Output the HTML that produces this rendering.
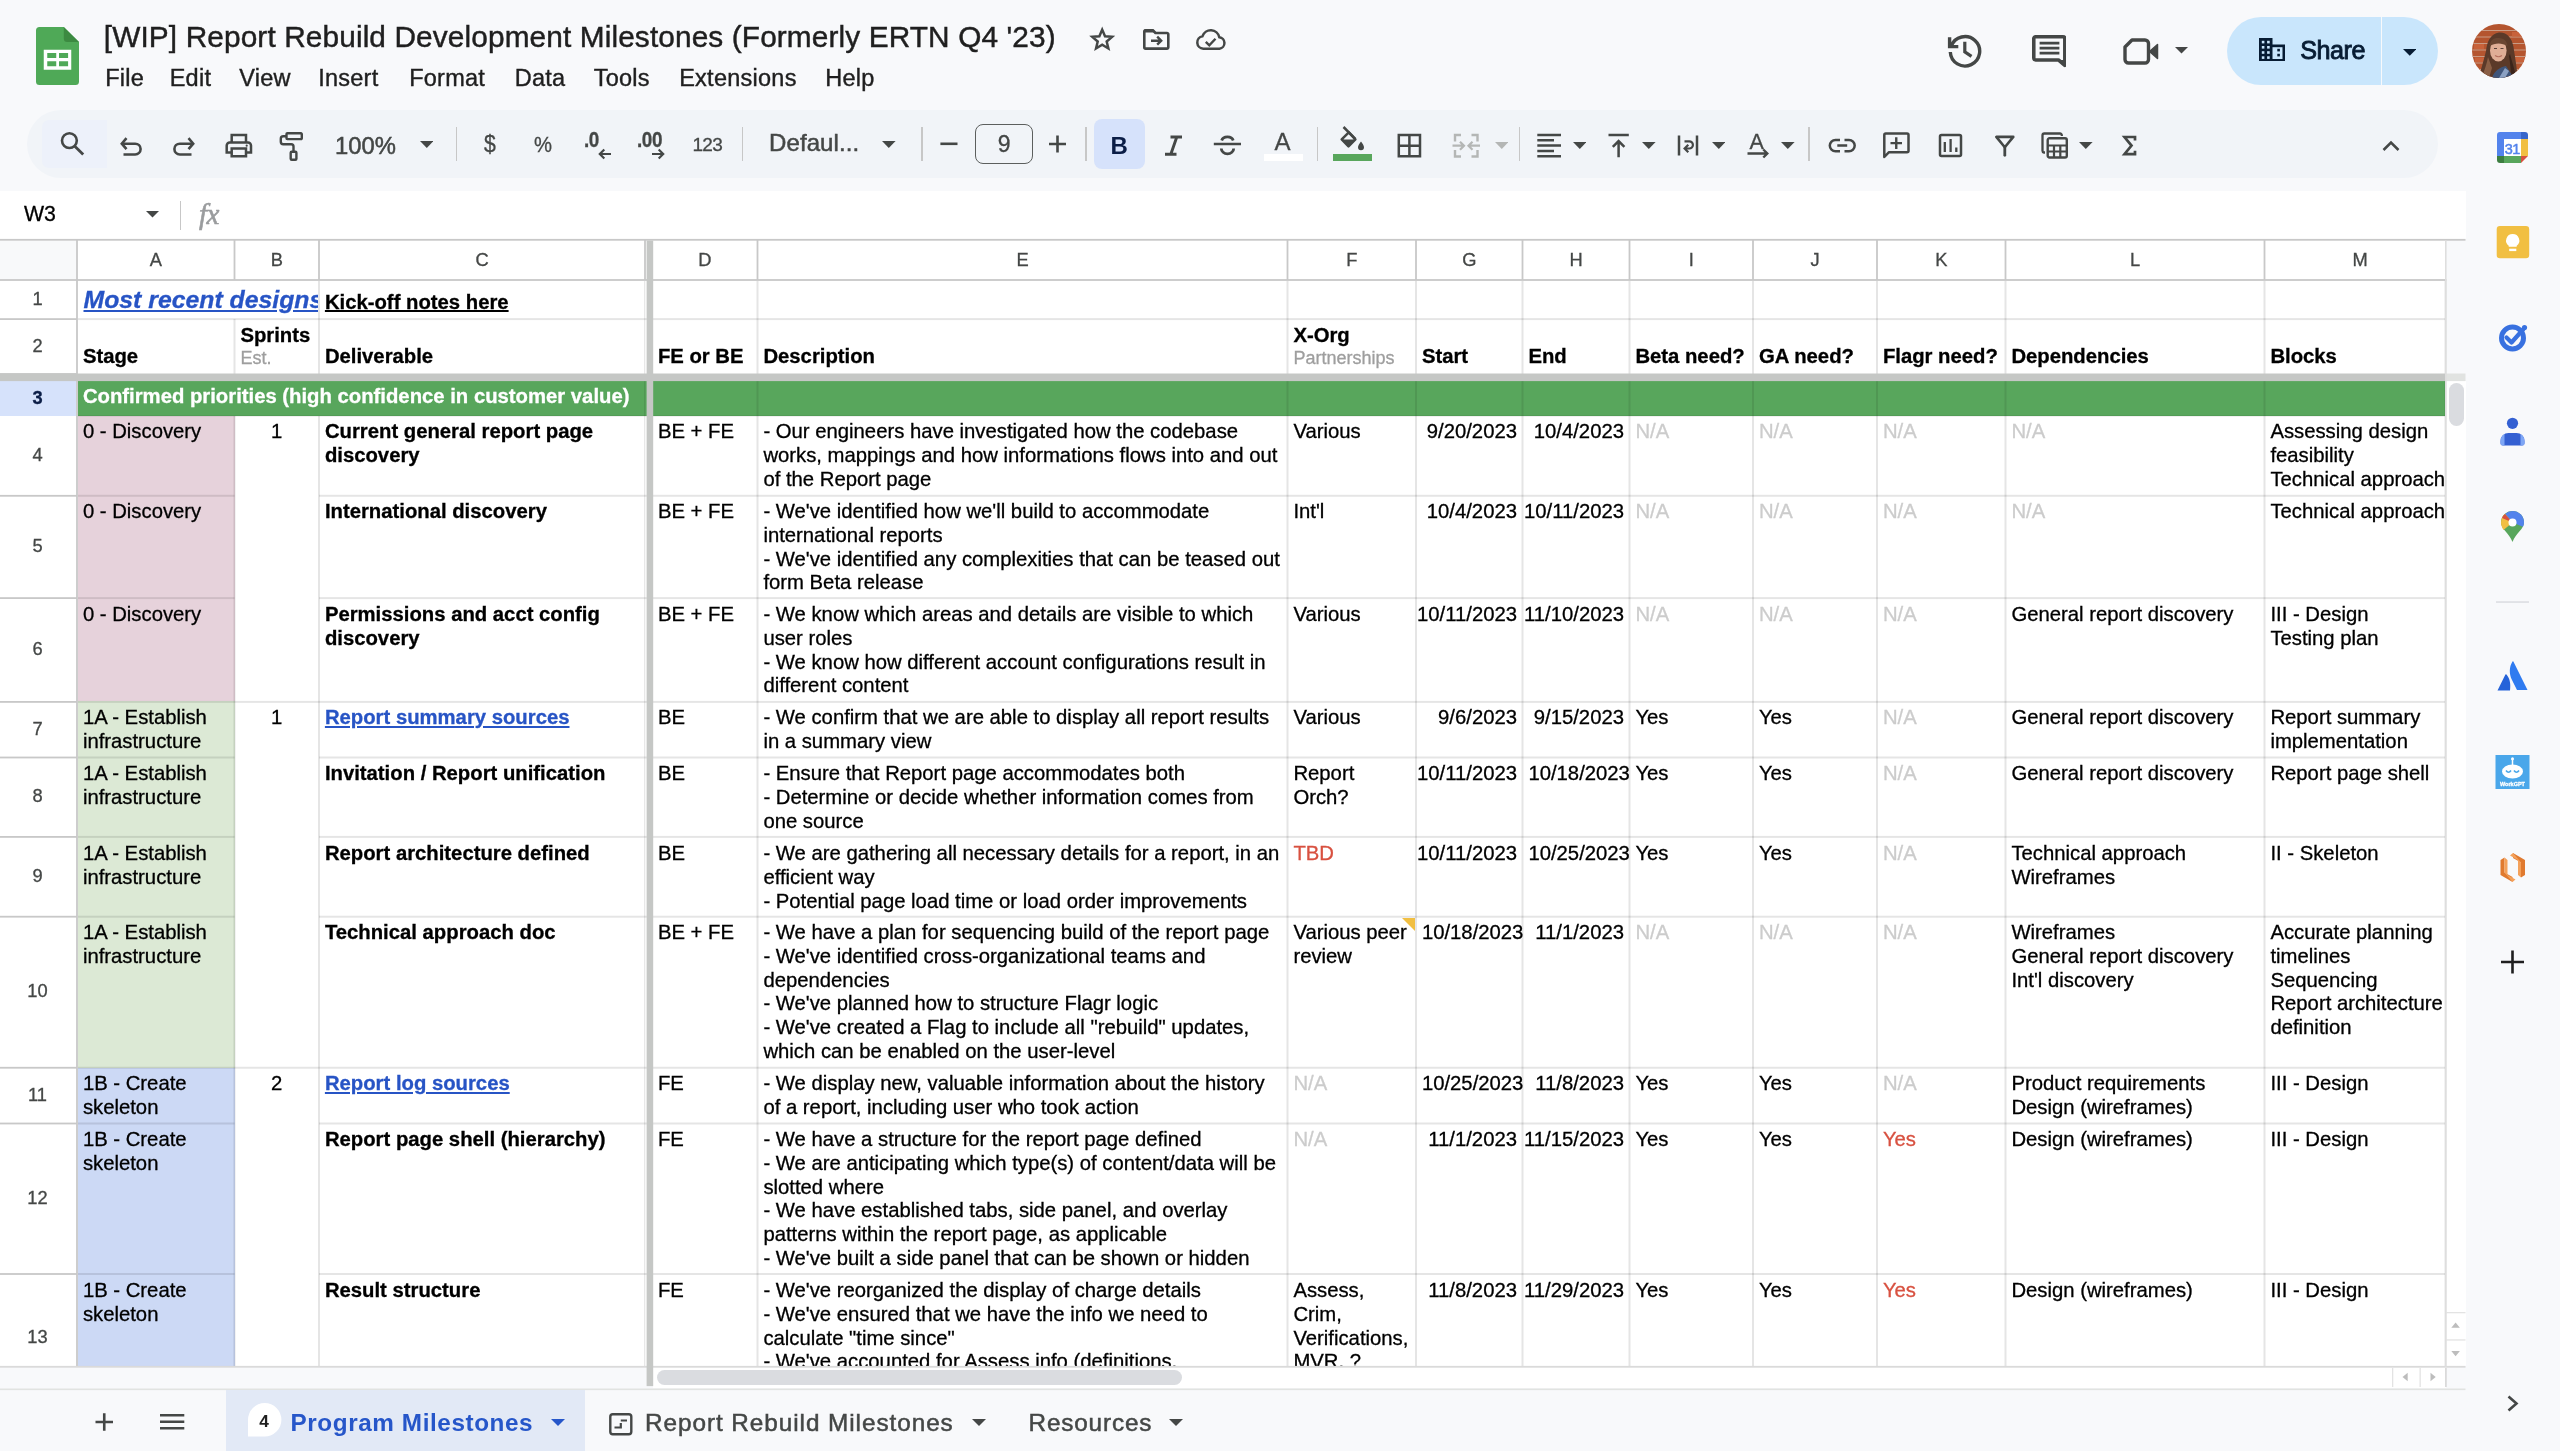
<!DOCTYPE html>
<html lang="en"><head><meta charset="utf-8"><title>[WIP] Report Rebuild Development Milestones - Google Sheets</title>
<style>
*{box-sizing:border-box;margin:0;padding:0}
html,body{width:2560px;height:1451px;overflow:hidden;background:#f8f9fb;font-family:"Liberation Sans", sans-serif;color:#000}
body{position:relative}
.a{position:absolute}
.t{position:absolute;white-space:pre;line-height:1;-webkit-text-stroke:0.3px currentColor}
.b{font-weight:bold}
.g{color:#cccccc}
.r{color:#d85140}
.lk{color:#2754c5;text-decoration:underline;font-weight:bold}
.ic{position:absolute;display:block}
</style></head>
<body>
<div id="app" style="position:absolute;left:0;top:0;width:2560px;height:1451px;overflow:hidden;background:#f8f9fb;will-change:transform">
<svg class="ic" style="left:36px;top:27px;width:43px;height:58px;" viewBox="0 0 43 58" preserveAspectRatio="none">
<path d="M3.500 0H27.800L43 15V54.500a3.500 3.500 0 0 1-3.500 3.500h-36A3.500 3.500 0 0 1 0 54.500v-51A3.500 3.500 0 0 1 3.500 0z" fill="#4fa957"/>
<path d="M27.800 0L43 15H31.300a3.500 3.500 0 0 1-3.500-3.500z" fill="#3c8a41"/>
<path d="M7.750 22.750h27.500v20H7.750z M11.250 26.100v5h9v-5z M23 26.100v5h9.100v-5z M11.250 34.250v5h9v-5z M23 34.250v5h9.100v-5z" fill="#fff" fill-rule="evenodd"/>
</svg>
<div class="t " style="left:103.8px;top:19px;font-size:29.8px;line-height:36px;color:#1f1f1f;letter-spacing:0.120px;-webkit-text-stroke:0.45px #1f1f1f">[WIP] Report Rebuild Development Milestones (Formerly ERTN Q4 '23)</div>
<svg class="ic" style="left:1080px;top:15px;width:160px;height:50px" viewBox="1080 15 160 50"><path d="M1102.20 29.62L1105.02 36.22L1112.14 36.84L1106.69 41.50L1108.36 48.45L1102.20 44.76L1096.04 48.45L1097.71 41.50L1092.26 36.84L1099.38 36.22Z" fill="none" stroke="#444746" stroke-width="2.500" stroke-linejoin="miter"/><path d="M1144.300 32V47.300A1.300 1.300 0 0 0 1145.600 48.600H1167A1.300 1.300 0 0 0 1168.300 47.300V34.300A1.300 1.300 0 0 0 1167 33H1155.500L1153 30.300H1145.600A1.300 1.300 0 0 0 1144.300 31.600Z" fill="none" stroke="#444746" stroke-width="2.600" stroke-linejoin="round"/><path d="M1144.300 29.300H1153.300L1155.800 32.600H1144.300Z" fill="#444746"/><path d="M1151 40.700H1161M1157.200 36.700L1161.200 40.700L1157.200 44.700" fill="none" stroke="#444746" stroke-width="2.400"/><path d="M1219.500 48.700H1203.300A6.300 6.300 0 0 1 1202.500 36.200A8.700 8.700 0 0 1 1219.300 37.200A5.800 5.800 0 0 1 1219.500 48.700Z" fill="none" stroke="#444746" stroke-width="2.500"/><path d="M1205.800 41.800L1209.300 45.300L1215.500 38.700" fill="none" stroke="#444746" stroke-width="2.400"/></svg>
<div class="t " style="left:105.2px;top:63.5px;font-size:23.5px;line-height:28px;color:#1f1f1f;letter-spacing:0.250px;-webkit-text-stroke:0.4px #1f1f1f">File</div>
<div class="t " style="left:169.7px;top:63.5px;font-size:23.5px;line-height:28px;color:#1f1f1f;letter-spacing:0.250px;-webkit-text-stroke:0.4px #1f1f1f">Edit</div>
<div class="t " style="left:239.2px;top:63.5px;font-size:23.5px;line-height:28px;color:#1f1f1f;letter-spacing:0.250px;-webkit-text-stroke:0.4px #1f1f1f">View</div>
<div class="t " style="left:318.2px;top:63.5px;font-size:23.5px;line-height:28px;color:#1f1f1f;letter-spacing:0.250px;-webkit-text-stroke:0.4px #1f1f1f">Insert</div>
<div class="t " style="left:409.2px;top:63.5px;font-size:23.5px;line-height:28px;color:#1f1f1f;letter-spacing:0.250px;-webkit-text-stroke:0.4px #1f1f1f">Format</div>
<div class="t " style="left:514.7px;top:63.5px;font-size:23.5px;line-height:28px;color:#1f1f1f;letter-spacing:0.250px;-webkit-text-stroke:0.4px #1f1f1f">Data</div>
<div class="t " style="left:593.7px;top:63.5px;font-size:23.5px;line-height:28px;color:#1f1f1f;letter-spacing:0.250px;-webkit-text-stroke:0.4px #1f1f1f">Tools</div>
<div class="t " style="left:679.2px;top:63.5px;font-size:23.5px;line-height:28px;color:#1f1f1f;letter-spacing:0.250px;-webkit-text-stroke:0.4px #1f1f1f">Extensions</div>
<div class="t " style="left:825.2px;top:63.5px;font-size:23.5px;line-height:28px;color:#1f1f1f;letter-spacing:0.250px;-webkit-text-stroke:0.4px #1f1f1f">Help</div>
<svg class="ic" style="left:1946px;top:32.5px;width:36px;height:36px;" viewBox="0 0 36 36" preserveAspectRatio="none"><path d="M5.200 13.200A14.700 14.700 0 1 1 4.300 19" fill="none" stroke="#444746" stroke-width="3.400"/><path d="M3.600 4.300V13.600H12.300" fill="none" stroke="#444746" stroke-width="3.400"/><path d="M18.800 8.800v10l6.700 4.600" fill="none" stroke="#444746" stroke-width="3.200"/></svg>
<svg class="ic" style="left:2031.7px;top:34.7px;width:34.6px;height:33.3px;" viewBox="0 0 35 34.500" preserveAspectRatio="none"><path d="M3.700 1.800h27.600a1.900 1.900 0 0 1 1.900 1.900V31.500l-6.500-5.700H3.700a1.900 1.900 0 0 1-1.900-1.900V3.700a1.900 1.900 0 0 1 1.900-1.900z" fill="none" stroke="#444746" stroke-width="3.600" stroke-linejoin="round"/><path d="M26.500 25.800h6.700v6.500z" fill="#444746"/><path d="M7.700 8.500h20M7.700 13.500h20M7.700 18.700h20" stroke="#444746" stroke-width="2.900"/></svg>
<svg class="ic" style="left:2123px;top:37px;width:36px;height:29px;" viewBox="0 0 36 29" preserveAspectRatio="none"><path d="M9 3h13a3.5 3.5 0 0 1 3.500 3.500V22.500A3.500 3.500 0 0 1 22 26H5.500A3.500 3.500 0 0 1 2 22.500V10z" fill="none" stroke="#444746" stroke-width="3.4" stroke-linejoin="round"/><path d="M26.500 14.500L34.500 7.500V21.500z" fill="#444746" stroke="#444746" stroke-width="1.5" stroke-linejoin="round"/></svg>
<svg class="ic" style="left:2175px;top:47.25px;width:13px;height:6.5px;" viewBox="0 0 10 5" preserveAspectRatio="none"><path d="M0 0h10L5 5z" fill="#444746"/></svg>
<div class="a" style="left:2227px;top:17px;width:211px;height:68px;border-radius:34px;background:#c9e6fc"></div>
<div class="a" style="left:2380.6px;top:17px;width:1.3px;height:68px;background:#f8f9fb;"></div>
<svg class="ic" style="left:2259px;top:37.5px;width:26px;height:23.5px;" viewBox="0 0 26 23.5" preserveAspectRatio="none"><path d="M0 0h13.500v6.500H26V23.500H0z" fill="#071c33"/><g fill="#c9e6fc"><rect x="2.800" y="2.800" width="2.600" height="2.600"/><rect x="8.100" y="2.800" width="2.600" height="2.600"/><rect x="2.800" y="8" width="2.600" height="2.600"/><rect x="8.100" y="8" width="2.600" height="2.600"/><rect x="2.800" y="13.200" width="2.600" height="2.600"/><rect x="8.100" y="13.200" width="2.600" height="2.600"/><rect x="2.800" y="18.300" width="2.600" height="2.600"/><rect x="8.100" y="18.300" width="2.600" height="2.600"/><rect x="13.500" y="9.200" width="10" height="11.800"/></g><g fill="#071c33"><rect x="18.300" y="10.800" width="2.600" height="2.600"/><rect x="18.300" y="15.800" width="2.600" height="2.600"/></g></svg>
<div class="t " style="left:2300.3px;top:34.75px;font-size:25.2px;line-height:30px;color:#071c33;letter-spacing:-0.500px;-webkit-text-stroke:0.850px #071c33">Share</div>
<svg class="ic" style="left:2402.55px;top:48.8px;width:13.5px;height:6.8px;" viewBox="0 0 10 5" preserveAspectRatio="none"><path d="M0 0h10L5 5z" fill="#071c33"/></svg>
<svg class="ic" style="left:2471.900px;top:23.600px;width:54px;height:54px" viewBox="0 0 54 54"><defs><clipPath id="av"><circle cx="27" cy="27" r="27"/></clipPath></defs><g clip-path="url(#av)"><rect width="54" height="54" fill="#b4552f"/><g stroke="#c99b84" stroke-width="1.100"><path d="M0 6.500H54M0 13H54M0 19.500H54M0 26H54M0 32.500H54M0 39H54M0 45.500H54"/></g><g fill="#c8623a"><rect x="2" y="20" width="10" height="5"/><rect x="40" y="8" width="12" height="4.500"/><rect x="42" y="33" width="10" height="5"/><rect x="3" y="33.500" width="9" height="4.500"/></g><path d="M7 54C9 44 12 36 14 27C15 17 19 9.500 27 8.500C35 8 40 14 41.500 23C43 33 45 44 45.500 54Z" fill="#5b3a29"/><path d="M10 54C12 46 15 40 16 33L20 44L17 54Z" fill="#8a5f45"/><path d="M38 30C40 38 43 46 44 54H39C39 46 38 38 37 32Z" fill="#3b241a"/><ellipse cx="26.300" cy="26.500" rx="8.300" ry="11" fill="#e0ae96"/><path d="M17.500 22C18 16 22 13.500 27 14C32 14.300 35 17 35.500 22C30 18.500 23 18.500 17.500 22Z" fill="#6b4632"/><path d="M22 24.500h3M28.500 24.500h3" stroke="#5a4038" stroke-width="1.200"/><path d="M23 31.500Q26.500 34 30 31.500" stroke="#b5705f" stroke-width="1.100" fill="none"/><path d="M20 54C22 47 28 43 34 42L42 54Z" fill="#3f557a"/><path d="M27 54L33 44L37 47L33 54Z" fill="#8aa0c2"/></g></svg>
<div class="a" style="left:27px;top:110px;width:2411px;height:68px;border-radius:34px;background:#f1f4f8"></div>
<div class="a" style="left:42px;top:119.500px;width:65px;height:48.500px;border-radius:7px 0 0 7px;background:#edf1fa"></div>
<div class="a" style="left:455.6px;top:127px;width:1.4px;height:33.5px;background:#c7c7c7;"></div>
<div class="a" style="left:741.8px;top:127px;width:1.4px;height:33.5px;background:#c7c7c7;"></div>
<div class="a" style="left:921.3px;top:127px;width:1.4px;height:33.5px;background:#c7c7c7;"></div>
<div class="a" style="left:1085.3px;top:127px;width:1.4px;height:33.5px;background:#c7c7c7;"></div>
<div class="a" style="left:1317.1px;top:127px;width:1.4px;height:33.5px;background:#c7c7c7;"></div>
<div class="a" style="left:1518.5px;top:127px;width:1.4px;height:33.5px;background:#c7c7c7;"></div>
<div class="a" style="left:1808.3px;top:127px;width:1.4px;height:33.5px;background:#c7c7c7;"></div>
<div class="t " style="left:335px;top:131px;font-size:23.8px;line-height:29px;color:#444746;-webkit-text-stroke:0.500px #444746">100%</div>
<div class="t " style="left:769px;top:128px;font-size:24px;line-height:29px;color:#444746;letter-spacing:0.100px;-webkit-text-stroke:0.500px #444746">Defaul...</div>
<div class="t " style="left:692.5px;top:132.6px;font-size:19px;line-height:23px;color:#444746;letter-spacing:-0.700px">123</div>
<div class="t " style="left:483.5px;top:129.5px;font-size:23px;line-height:28px;color:#444746;transform:scaleX(0.92);transform-origin:0 0">$</div>
<div class="t " style="left:534px;top:131px;font-size:22.5px;line-height:27px;color:#444746;transform:scaleX(0.9);transform-origin:0 0">%</div>
<div class="t b" style="left:583.5px;top:127.2px;font-size:21.5px;line-height:26px;color:#444746;letter-spacing:-0.5px;transform:scaleX(0.88);transform-origin:0 0">.0</div>
<div class="t b" style="left:637px;top:127.2px;font-size:21.5px;line-height:26px;color:#444746;letter-spacing:-0.5px;transform:scaleX(0.88);transform-origin:0 0">.00</div>
<div class="a" style="left:975px;top:123.500px;width:58px;height:40.500px;border:1.800px solid #5c5f5e;border-radius:8px"></div>
<div class="t " style="left:1004.2px;transform:translateX(-50%);top:130px;font-size:23px;line-height:28px;color:#444746">9</div>
<div class="a" style="left:1094px;top:118.500px;width:50.500px;height:50.500px;border-radius:8px;background:#d6e2fb"></div>
<div class="t b" style="left:1119.2px;transform:translateX(-50%);top:130.5px;font-size:24px;line-height:29px;color:#0b1d46;-webkit-text-stroke:0">B</div>
<div class="t " style="left:1282.5px;transform:translateX(-50%);top:127px;font-size:24px;line-height:29px;color:#444746">A</div>
<div class="a" style="left:1264px;top:154px;width:39px;height:7px;background:#ffffff;"></div>
<div class="t " style="left:1756.7px;transform:translateX(-50%);top:129px;font-size:21.5px;line-height:26px;color:#444746">A</div>
<div class="a" style="left:1333px;top:154px;width:39.3px;height:7px;background:#58a65c;"></div>
<svg class="ic" style="left:419.9px;top:141.1px;width:13.6px;height:7px;" viewBox="0 0 10 5" preserveAspectRatio="none"><path d="M0 0h10L5 5z" fill="#444746"/></svg>
<svg class="ic" style="left:882px;top:140.6px;width:13.6px;height:7px;" viewBox="0 0 10 5" preserveAspectRatio="none"><path d="M0 0h10L5 5z" fill="#444746"/></svg>
<svg class="ic" style="left:1572.9px;top:142.1px;width:13.6px;height:7px;" viewBox="0 0 10 5" preserveAspectRatio="none"><path d="M0 0h10L5 5z" fill="#444746"/></svg>
<svg class="ic" style="left:1642.4px;top:142.1px;width:13.6px;height:7px;" viewBox="0 0 10 5" preserveAspectRatio="none"><path d="M0 0h10L5 5z" fill="#444746"/></svg>
<svg class="ic" style="left:1711.9px;top:142.1px;width:13.6px;height:7px;" viewBox="0 0 10 5" preserveAspectRatio="none"><path d="M0 0h10L5 5z" fill="#444746"/></svg>
<svg class="ic" style="left:1781.2px;top:142.1px;width:13.6px;height:7px;" viewBox="0 0 10 5" preserveAspectRatio="none"><path d="M0 0h10L5 5z" fill="#444746"/></svg>
<svg class="ic" style="left:2079.2px;top:142.1px;width:13.6px;height:7px;" viewBox="0 0 10 5" preserveAspectRatio="none"><path d="M0 0h10L5 5z" fill="#444746"/></svg>
<svg class="ic" style="left:1494.9px;top:142.1px;width:13.6px;height:7px;" viewBox="0 0 10 5" preserveAspectRatio="none"><path d="M0 0h10L5 5z" fill="#b4b6b5"/></svg>
<svg class="ic" style="left:0;top:100px;width:2560px;height:90px" viewBox="0 100 2560 90"><circle cx="69.400" cy="140.600" r="7.400" fill="none" stroke="#444746" stroke-width="2.600"/><path d="M74.800 146.200L83.200 154.500" fill="none" stroke="#444746" stroke-width="2.8" /><path d="M126.500 138.200L121.800 143.700L126.500 149.200" fill="none" stroke="#444746" stroke-width="2.6" /><path d="M122.500 143.700H135.200A5.400 5.400 0 0 1 135.200 154.500H123.500" fill="none" stroke="#444746" stroke-width="2.6" /><path d="M188.500 138.200L193.200 143.700L188.500 149.200" fill="none" stroke="#444746" stroke-width="2.6" /><path d="M192.500 143.700H179.800A5.400 5.400 0 0 0 179.800 154.500H191.500" fill="none" stroke="#444746" stroke-width="2.6" /><path d="M231.700 142V135H246V142" fill="none" stroke="#444746" stroke-width="2.5" /><path d="M231.700 152.500H226.700V145.500A3 3 0 0 1 229.700 142.500H248A3 3 0 0 1 251 145.500V152.500H246" fill="none" stroke="#444746" stroke-width="2.5" /><path d="M231.700 148.500H246V156.300H231.700Z" fill="none" stroke="#444746" stroke-width="2.5" /><circle cx="246.700" cy="145.700" r="1.100" fill="#444746"/><path d="M287.300 133.300H301A0.800 0.800 0 0 1 301.800 134.100V138.300A0.800 0.800 0 0 1 301 139.100H287.300A0.800 0.800 0 0 1 286.500 138.300V134.100A0.800 0.800 0 0 1 287.300 133.300Z" fill="none" stroke="#444746" stroke-width="2.4" /><path d="M286.500 136.200H283.300A2.500 2.500 0 0 0 280.800 138.700V141.700A2.500 2.500 0 0 0 283.300 144.200H291.200A2.300 2.300 0 0 1 293.500 146.500V151.500" fill="none" stroke="#444746" stroke-width="2.4" /><path d="M291.700 151.800H295.400A1 1 0 0 1 296.400 152.800V158.700A1 1 0 0 1 295.400 159.700H291.700A1 1 0 0 1 290.700 158.700V152.800A1 1 0 0 1 291.700 151.800Z" fill="none" stroke="#444746" stroke-width="2.4" /><path d="M611 154H599.500M604.300 149.500L599.800 154L604.300 158.500" fill="none" stroke="#444746" stroke-width="2.2" /><path d="M652 154H663.500M658.700 149.500L663.200 154L658.700 158.500" fill="none" stroke="#444746" stroke-width="2.2" /><path d="M940.400 143.800H957.500" fill="none" stroke="#444746" stroke-width="2.6" /><path d="M1049 144H1066M1057.500 135.500V152.500" fill="none" stroke="#444746" stroke-width="2.6" /><path d="M1170.500 137H1182M1165 154.200H1176.500M1176.800 137L1170.800 154.200" fill="none" stroke="#444746" stroke-width="2.9" /><path d="M1213.800 144H1241" fill="none" stroke="#444746" stroke-width="2.5" /><path d="M1233.200 140.500A5.900 4.600 0 0 0 1221.700 140.500" fill="none" stroke="#444746" stroke-width="2.8" /><path d="M1221.300 148.500A6.100 5.300 0 0 0 1233.700 148.500" fill="none" stroke="#444746" stroke-width="2.8" /><path d="M1343.500 127L1355.300 138.800" fill="none" stroke="#444746" stroke-width="2.5" /><path d="M1348.800 132.300L1341.700 139.400L1348.500 146.300L1355.400 139.400Z" fill="none" stroke="#444746" stroke-width="2.5" stroke-linejoin="round"/><path d="M1341.200 139.600H1355.800L1348.500 147Z" fill="#444746"/><path d="M1361 141.500C1362.500 143.700 1364 145.500 1364 147.200A3 3 0 0 1 1358 147.200C1358 145.500 1359.500 143.700 1361 141.500Z" fill="#444746"/><path d="M1398.800 135H1420V156.300H1398.800ZM1409.400 135V156.300M1398.800 145.700H1420" fill="none" stroke="#444746" stroke-width="2.5" /><path d="M1461 135H1455V141.500M1455 150V156.500H1461M1471.500 135H1477.500V141.500M1477.500 150V156.500H1471.500" fill="none" stroke="#b4b6b5" stroke-width="2.400"/><path d="M1452.500 145.700H1463.500M1460 141.700L1464 145.700L1460 149.700M1480 145.700H1469M1472.500 141.700L1468.500 145.700L1472.500 149.700" fill="none" stroke="#b4b6b5" stroke-width="2.200"/><path d="M1537.300 135H1561M1537.300 140.300H1554M1537.300 145.600H1561M1537.300 151H1554M1537.300 156.300H1561" fill="none" stroke="#444746" stroke-width="2.5" /><path d="M1608.500 135H1628.800M1618.600 157.300V141M1612.800 146.800L1618.600 141L1624.400 146.800" fill="none" stroke="#444746" stroke-width="2.5" /><path d="M1679 135.600V155.600M1697 135.600V155.600" fill="none" stroke="#444746" stroke-width="2.5" /><path d="M1684.500 141.300H1689.300A3.600 3.600 0 0 1 1689.300 148.500H1685M1688.300 144.800L1684.600 148.500L1688.300 152.200" fill="none" stroke="#444746" stroke-width="2.2" /><path d="M1747.500 153.500H1767M1763.300 149.500L1767.300 153.500L1763.300 157.500" fill="none" stroke="#444746" stroke-width="2.4" /><path d="M1840 139.900H1835.500A5.700 5.700 0 0 0 1835.500 151.300H1840M1844.500 139.900H1849A5.700 5.700 0 0 1 1849 151.300H1844.500M1837.300 145.600H1847.200" fill="none" stroke="#444746" stroke-width="2.5" /><path d="M1884.300 157V135A1.500 1.500 0 0 1 1885.800 133.500H1907A1.500 1.500 0 0 1 1908.500 135V150.700A1.500 1.500 0 0 1 1907 152.200H1889Z" fill="none" stroke="#444746" stroke-width="2.5" stroke-linejoin="round"/><path d="M1890.500 143.100H1902M1896.250 137.300V148.900" fill="none" stroke="#444746" stroke-width="2.4" /><path d="M1941.500 135H1959.500A1.500 1.500 0 0 1 1961 136.500V154.500A1.500 1.500 0 0 1 1959.500 156H1941.500A1.500 1.500 0 0 1 1940 154.500V136.500A1.500 1.500 0 0 1 1941.500 135Z" fill="none" stroke="#444746" stroke-width="2.5" /><path d="M1944.800 142V152M1950.600 139V152M1956.300 147.500V152" fill="none" stroke="#444746" stroke-width="2.3" /><path d="M1996.300 136.900H2013.300L2004.800 147.300Z" fill="none" stroke="#444746" stroke-width="2.6" stroke-linejoin="round"/><path d="M2004.800 146.500V155.300" fill="none" stroke="#444746" stroke-width="2.8" stroke-linecap="round"/><path d="M2045 152.500H2044A1.800 1.800 0 0 1 2042.500 150.700V135.300A1.800 1.800 0 0 1 2044.300 133.500H2060A1.800 1.800 0 0 1 2061.800 135.300V136" fill="none" stroke="#444746" stroke-width="2.3" /><path d="M2049.500 138.200H2065A1.800 1.800 0 0 1 2066.800 140V155.700A1.800 1.800 0 0 1 2065 157.500H2049.500A1.800 1.800 0 0 1 2047.700 155.700V140A1.800 1.800 0 0 1 2049.500 138.200Z" fill="none" stroke="#444746" stroke-width="2.4" /><path d="M2047.700 145.500H2066.800M2047.700 151.500H2066.800M2054 145.500V157.500M2060.300 145.500V157.500" fill="none" stroke="#444746" stroke-width="2.2" /><path d="M2135 140.500V137H2124.500L2131.500 145.600L2124.500 154.200H2135V150.700" fill="none" stroke="#444746" stroke-width="2.7" stroke-linejoin="miter"/><path d="M2383.500 150L2391 142.500L2398.500 150" fill="none" stroke="#444746" stroke-width="2.5" /></svg>
<div class="a" style="left:0px;top:191px;width:2465.5px;height:48px;background:#ffffff;"></div>
<div class="t " style="left:24px;top:201.3px;font-size:21.3px;line-height:26px;color:#000">W3</div>
<svg class="ic" style="left:146px;top:211.25px;width:13px;height:6.5px;" viewBox="0 0 10 5" preserveAspectRatio="none"><path d="M0 0h10L5 5z" fill="#444746"/></svg>
<div class="a" style="left:179.6px;top:201px;width:1.8px;height:28.5px;background:#c7c7c7;"></div>
<div class="t" style="left:199px;top:198px;font-size:29px;line-height:32px;font-family:'Liberation Serif',serif;font-style:italic;color:#9a9c9e;letter-spacing:-0.500px;-webkit-text-stroke:0.600px #9a9c9e">fx</div>
<div class="a" style="left:0px;top:240px;width:2445.5px;height:1126px;background:#ffffff;"></div>
<div class="a" style="left:2445.5px;top:381px;width:20px;height:985px;background:#ffffff;"></div>
<div class="a" style="left:653px;top:1366px;width:1792.5px;height:22px;background:#ffffff;"></div>
<div class="a" style="left:0px;top:241px;width:76px;height:38px;background:#f8f9fa;"></div>
<div class="a" style="left:0px;top:381px;width:76px;height:35px;background:#d6e2fb;"></div>
<div class="a" style="left:78px;top:381px;width:2366.5px;height:35px;background:#58a65c;"></div>
<div class="a" style="left:78px;top:416px;width:156.5px;height:285px;background:#e6d2db;"></div>
<div class="a" style="left:78px;top:701px;width:156.5px;height:366.5px;background:#dce9d5;"></div>
<div class="a" style="left:78px;top:1067.5px;width:156.5px;height:298.5px;background:#ccd9f5;"></div>
<div class="t " style="left:155.75px;transform:translateX(-50%);top:249.2px;font-size:18.3px;line-height:22px;color:#444746">A</div>
<div class="t " style="left:276.75px;transform:translateX(-50%);top:249.2px;font-size:18.3px;line-height:22px;color:#444746">B</div>
<div class="t " style="left:482px;transform:translateX(-50%);top:249.2px;font-size:18.3px;line-height:22px;color:#444746">C</div>
<div class="t " style="left:704.75px;transform:translateX(-50%);top:249.2px;font-size:18.3px;line-height:22px;color:#444746">D</div>
<div class="t " style="left:1022.5px;transform:translateX(-50%);top:249.2px;font-size:18.3px;line-height:22px;color:#444746">E</div>
<div class="t " style="left:1351.75px;transform:translateX(-50%);top:249.2px;font-size:18.3px;line-height:22px;color:#444746">F</div>
<div class="t " style="left:1469.25px;transform:translateX(-50%);top:249.2px;font-size:18.3px;line-height:22px;color:#444746">G</div>
<div class="t " style="left:1576px;transform:translateX(-50%);top:249.2px;font-size:18.3px;line-height:22px;color:#444746">H</div>
<div class="t " style="left:1691.25px;transform:translateX(-50%);top:249.2px;font-size:18.3px;line-height:22px;color:#444746">I</div>
<div class="t " style="left:1815px;transform:translateX(-50%);top:249.2px;font-size:18.3px;line-height:22px;color:#444746">J</div>
<div class="t " style="left:1941.25px;transform:translateX(-50%);top:249.2px;font-size:18.3px;line-height:22px;color:#444746">K</div>
<div class="t " style="left:2135px;transform:translateX(-50%);top:249.2px;font-size:18.3px;line-height:22px;color:#444746">L</div>
<div class="t " style="left:2360px;transform:translateX(-50%);top:249.2px;font-size:18.3px;line-height:22px;color:#444746">M</div>
<div class="t " style="left:37.5px;transform:translateX(-50%);top:287.6px;font-size:18.3px;line-height:22px;color:#444746">1</div>
<div class="t " style="left:37.5px;transform:translateX(-50%);top:335.1px;font-size:18.3px;line-height:22px;color:#444746">2</div>
<div class="t b" style="left:37.5px;transform:translateX(-50%);top:386.6px;font-size:18.3px;line-height:22px;color:#0b1d46">3</div>
<div class="t " style="left:37.5px;transform:translateX(-50%);top:444px;font-size:18.3px;line-height:22px;color:#444746">4</div>
<div class="t " style="left:37.5px;transform:translateX(-50%);top:535.05px;font-size:18.3px;line-height:22px;color:#444746">5</div>
<div class="t " style="left:37.5px;transform:translateX(-50%);top:638.1px;font-size:18.3px;line-height:22px;color:#444746">6</div>
<div class="t " style="left:37.5px;transform:translateX(-50%);top:717.8px;font-size:18.3px;line-height:22px;color:#444746">7</div>
<div class="t " style="left:37.5px;transform:translateX(-50%);top:785.3px;font-size:18.3px;line-height:22px;color:#444746">8</div>
<div class="t " style="left:37.5px;transform:translateX(-50%);top:864.9px;font-size:18.3px;line-height:22px;color:#444746">9</div>
<div class="t " style="left:37.5px;transform:translateX(-50%);top:980.33px;font-size:18.3px;line-height:22px;color:#444746">10</div>
<div class="t " style="left:37.5px;transform:translateX(-50%);top:1083.72px;font-size:18.3px;line-height:22px;color:#444746">11</div>
<div class="t " style="left:37.5px;transform:translateX(-50%);top:1186.85px;font-size:18.3px;line-height:22px;color:#444746">12</div>
<div class="t " style="left:37.5px;transform:translateX(-50%);top:1325.5px;font-size:18.3px;line-height:22px;color:#444746">13</div>
<div class="a" style="left:78px;top:281px;width:240px;height:37px;overflow:hidden"><div class="t" style="left:5.500px;top:4.500px;font-size:24.800px;line-height:28px;font-weight:bold;font-style:italic;color:#2754c5;text-decoration:underline;text-decoration-thickness:1.500px;text-underline-offset:2px">Most recent designs</div></div>
<div class="t b" style="left:324.9px;top:290.62px;font-size:20.3px;line-height:23.75px;text-decoration:underline;text-decoration-thickness:1.500px">Kick-off notes here</div>
<div class="t b" style="left:82.9px;top:345.12px;font-size:20.3px;line-height:23.75px;">Stage</div>
<div class="t b" style="left:324.9px;top:345.12px;font-size:20.3px;line-height:23.75px;">Deliverable</div>
<div class="t b" style="left:657.9px;top:345.12px;font-size:20.3px;line-height:23.75px;">FE or BE</div>
<div class="t b" style="left:763.4px;top:345.12px;font-size:20.3px;line-height:23.75px;">Description</div>
<div class="t b" style="left:1421.9px;top:345.12px;font-size:20.3px;line-height:23.75px;">Start</div>
<div class="t b" style="left:1528.4px;top:345.12px;font-size:20.3px;line-height:23.75px;">End</div>
<div class="t b" style="left:1635.4px;top:345.12px;font-size:20.3px;line-height:23.75px;">Beta need?</div>
<div class="t b" style="left:1758.9px;top:345.12px;font-size:20.3px;line-height:23.75px;">GA need?</div>
<div class="t b" style="left:1882.9px;top:345.12px;font-size:20.3px;line-height:23.75px;">Flagr need?</div>
<div class="t b" style="left:2011.4px;top:345.12px;font-size:20.3px;line-height:23.75px;">Dependencies</div>
<div class="t b" style="left:2270.4px;top:345.12px;font-size:20.3px;line-height:23.75px;">Blocks</div>
<div class="t b" style="left:240.4px;top:324.12px;font-size:20.3px;line-height:23.75px;">Sprints</div>
<div class="t " style="left:240.4px;top:346.62px;font-size:18px;line-height:23.75px;color:#9e9e9e">Est.</div>
<div class="t b" style="left:1293.4px;top:324.12px;font-size:20.3px;line-height:23.75px;">X-Org</div>
<div class="t " style="left:1293.4px;top:346.62px;font-size:18px;line-height:23.75px;color:#9e9e9e">Partnerships</div>
<div class="t b" style="left:82.9px;top:384.62px;font-size:20.3px;line-height:23.75px;color:#fff">Confirmed priorities (high confidence in customer value)</div>
<div class="a" style="left:0;top:0;width:2444.5px;height:1366px;overflow:hidden">
<div class="t " style="left:82.9px;top:420.12px;font-size:20.3px;line-height:23.75px;">0 - Discovery</div>
<div class="t b" style="left:324.9px;top:420.12px;font-size:20.3px;line-height:23.75px;">Current general report page<br>discovery</div>
<div class="t " style="left:657.9px;top:420.12px;font-size:20.3px;line-height:23.75px;">BE + FE</div>
<div class="t " style="left:763.4px;top:420.12px;font-size:20.3px;line-height:23.75px;">- Our engineers have investigated how the codebase<br>works, mappings and how informations flows into and out<br>of the Report page</div>
<div class="t " style="left:1293.4px;top:420.12px;font-size:20.3px;line-height:23.75px;">Various</div>
<div class="t " style="left:1417px;width:100px;text-align:right;top:420.12px;font-size:20.3px;line-height:23.75px;">9/20/2023</div>
<div class="t " style="left:1523.5px;width:100.5px;text-align:right;top:420.12px;font-size:20.3px;line-height:23.75px;">10/4/2023</div>
<div class="t g" style="left:1635.4px;top:420.12px;font-size:20.3px;line-height:23.75px;">N/A</div>
<div class="t g" style="left:1758.9px;top:420.12px;font-size:20.3px;line-height:23.75px;">N/A</div>
<div class="t g" style="left:1882.9px;top:420.12px;font-size:20.3px;line-height:23.75px;">N/A</div>
<div class="t g" style="left:2011.4px;top:420.12px;font-size:20.3px;line-height:23.75px;">N/A</div>
<div class="t " style="left:2270.4px;top:420.12px;font-size:20.3px;line-height:23.75px;">Assessing design<br>feasibility<br>Technical approach</div>
<div class="t " style="left:82.9px;top:500.12px;font-size:20.3px;line-height:23.75px;">0 - Discovery</div>
<div class="t b" style="left:324.9px;top:500.12px;font-size:20.3px;line-height:23.75px;">International discovery</div>
<div class="t " style="left:657.9px;top:500.12px;font-size:20.3px;line-height:23.75px;">BE + FE</div>
<div class="t " style="left:763.4px;top:500.12px;font-size:20.3px;line-height:23.75px;">- We've identified how we'll build to accommodate<br>international reports<br>- We've identified any complexities that can be teased out<br>form Beta release</div>
<div class="t " style="left:1293.4px;top:500.12px;font-size:20.3px;line-height:23.75px;">Int'l</div>
<div class="t " style="left:1417px;width:100px;text-align:right;top:500.12px;font-size:20.3px;line-height:23.75px;">10/4/2023</div>
<div class="t " style="left:1523.5px;width:100.5px;text-align:right;top:500.12px;font-size:20.3px;line-height:23.75px;">10/11/2023</div>
<div class="t g" style="left:1635.4px;top:500.12px;font-size:20.3px;line-height:23.75px;">N/A</div>
<div class="t g" style="left:1758.9px;top:500.12px;font-size:20.3px;line-height:23.75px;">N/A</div>
<div class="t g" style="left:1882.9px;top:500.12px;font-size:20.3px;line-height:23.75px;">N/A</div>
<div class="t g" style="left:2011.4px;top:500.12px;font-size:20.3px;line-height:23.75px;">N/A</div>
<div class="t " style="left:2270.4px;top:500.12px;font-size:20.3px;line-height:23.75px;">Technical approach</div>
<div class="t " style="left:82.9px;top:603.12px;font-size:20.3px;line-height:23.75px;">0 - Discovery</div>
<div class="t b" style="left:324.9px;top:603.12px;font-size:20.3px;line-height:23.75px;">Permissions and acct config<br>discovery</div>
<div class="t " style="left:657.9px;top:603.12px;font-size:20.3px;line-height:23.75px;">BE + FE</div>
<div class="t " style="left:763.4px;top:603.12px;font-size:20.3px;line-height:23.75px;">- We know which areas and details are visible to which<br>user roles<br>- We know how different account configurations result in<br>different content</div>
<div class="t " style="left:1293.4px;top:603.12px;font-size:20.3px;line-height:23.75px;">Various</div>
<div class="t " style="left:1417px;width:100px;text-align:right;top:603.12px;font-size:20.3px;line-height:23.75px;">10/11/2023</div>
<div class="t " style="left:1523.5px;width:100.5px;text-align:right;top:603.12px;font-size:20.3px;line-height:23.75px;">11/10/2023</div>
<div class="t g" style="left:1635.4px;top:603.12px;font-size:20.3px;line-height:23.75px;">N/A</div>
<div class="t g" style="left:1758.9px;top:603.12px;font-size:20.3px;line-height:23.75px;">N/A</div>
<div class="t g" style="left:1882.9px;top:603.12px;font-size:20.3px;line-height:23.75px;">N/A</div>
<div class="t " style="left:2011.4px;top:603.12px;font-size:20.3px;line-height:23.75px;">General report discovery</div>
<div class="t " style="left:2270.4px;top:603.12px;font-size:20.3px;line-height:23.75px;">III - Design<br>Testing plan</div>
<div class="t " style="left:82.9px;top:706.12px;font-size:20.3px;line-height:23.75px;">1A - Establish<br>infrastructure</div>
<div class="t lk" style="left:324.9px;top:706.12px;font-size:20.3px;line-height:23.75px;">Report summary sources</div>
<div class="t " style="left:657.9px;top:706.12px;font-size:20.3px;line-height:23.75px;">BE</div>
<div class="t " style="left:763.4px;top:706.12px;font-size:20.3px;line-height:23.75px;">- We confirm that we are able to display all report results<br>in a summary view</div>
<div class="t " style="left:1293.4px;top:706.12px;font-size:20.3px;line-height:23.75px;">Various</div>
<div class="t " style="left:1417px;width:100px;text-align:right;top:706.12px;font-size:20.3px;line-height:23.75px;">9/6/2023</div>
<div class="t " style="left:1523.5px;width:100.5px;text-align:right;top:706.12px;font-size:20.3px;line-height:23.75px;">9/15/2023</div>
<div class="t " style="left:1635.4px;top:706.12px;font-size:20.3px;line-height:23.75px;">Yes</div>
<div class="t " style="left:1758.9px;top:706.12px;font-size:20.3px;line-height:23.75px;">Yes</div>
<div class="t g" style="left:1882.9px;top:706.12px;font-size:20.3px;line-height:23.75px;">N/A</div>
<div class="t " style="left:2011.4px;top:706.12px;font-size:20.3px;line-height:23.75px;">General report discovery</div>
<div class="t " style="left:2270.4px;top:706.12px;font-size:20.3px;line-height:23.75px;">Report summary<br>implementation</div>
<div class="t " style="left:82.9px;top:762.12px;font-size:20.3px;line-height:23.75px;">1A - Establish<br>infrastructure</div>
<div class="t b" style="left:324.9px;top:762.12px;font-size:20.3px;line-height:23.75px;">Invitation / Report unification</div>
<div class="t " style="left:657.9px;top:762.12px;font-size:20.3px;line-height:23.75px;">BE</div>
<div class="t " style="left:763.4px;top:762.12px;font-size:20.3px;line-height:23.75px;">- Ensure that Report page accommodates both<br>- Determine or decide whether information comes from<br>one source</div>
<div class="t " style="left:1293.4px;top:762.12px;font-size:20.3px;line-height:23.75px;">Report<br>Orch?</div>
<div class="t " style="left:1417px;width:100px;text-align:right;top:762.12px;font-size:20.3px;line-height:23.75px;">10/11/2023</div>
<div class="t " style="left:1528.4px;top:762.12px;font-size:20.3px;line-height:23.75px;">10/18/2023</div>
<div class="t " style="left:1635.4px;top:762.12px;font-size:20.3px;line-height:23.75px;">Yes</div>
<div class="t " style="left:1758.9px;top:762.12px;font-size:20.3px;line-height:23.75px;">Yes</div>
<div class="t g" style="left:1882.9px;top:762.12px;font-size:20.3px;line-height:23.75px;">N/A</div>
<div class="t " style="left:2011.4px;top:762.12px;font-size:20.3px;line-height:23.75px;">General report discovery</div>
<div class="t " style="left:2270.4px;top:762.12px;font-size:20.3px;line-height:23.75px;">Report page shell</div>
<div class="t " style="left:82.9px;top:842.12px;font-size:20.3px;line-height:23.75px;">1A - Establish<br>infrastructure</div>
<div class="t b" style="left:324.9px;top:842.12px;font-size:20.3px;line-height:23.75px;">Report architecture defined</div>
<div class="t " style="left:657.9px;top:842.12px;font-size:20.3px;line-height:23.75px;">BE</div>
<div class="t " style="left:763.4px;top:842.12px;font-size:20.3px;line-height:23.75px;">- We are gathering all necessary details for a report, in an<br>efficient way<br>- Potential page load time or load order improvements</div>
<div class="t r" style="left:1293.4px;top:842.12px;font-size:20.3px;line-height:23.75px;">TBD</div>
<div class="t " style="left:1417px;width:100px;text-align:right;top:842.12px;font-size:20.3px;line-height:23.75px;">10/11/2023</div>
<div class="t " style="left:1528.4px;top:842.12px;font-size:20.3px;line-height:23.75px;">10/25/2023</div>
<div class="t " style="left:1635.4px;top:842.12px;font-size:20.3px;line-height:23.75px;">Yes</div>
<div class="t " style="left:1758.9px;top:842.12px;font-size:20.3px;line-height:23.75px;">Yes</div>
<div class="t g" style="left:1882.9px;top:842.12px;font-size:20.3px;line-height:23.75px;">N/A</div>
<div class="t " style="left:2011.4px;top:842.12px;font-size:20.3px;line-height:23.75px;">Technical approach<br>Wireframes</div>
<div class="t " style="left:2270.4px;top:842.12px;font-size:20.3px;line-height:23.75px;">II - Skeleton</div>
<div class="t " style="left:82.9px;top:921.12px;font-size:20.3px;line-height:23.75px;">1A - Establish<br>infrastructure</div>
<div class="t b" style="left:324.9px;top:921.12px;font-size:20.3px;line-height:23.75px;">Technical approach doc</div>
<div class="t " style="left:657.9px;top:921.12px;font-size:20.3px;line-height:23.75px;">BE + FE</div>
<div class="t " style="left:763.4px;top:921.12px;font-size:20.3px;line-height:23.75px;">- We have a plan for sequencing build of the report page<br>- We've identified cross-organizational teams and<br>dependencies<br>- We've planned how to structure Flagr logic<br>- We've created a Flag to include all "rebuild" updates,<br>which can be enabled on the user-level</div>
<div class="t " style="left:1293.4px;top:921.12px;font-size:20.3px;line-height:23.75px;">Various peer<br>review</div>
<div class="t " style="left:1421.9px;top:921.12px;font-size:20.3px;line-height:23.75px;">10/18/2023</div>
<div class="t " style="left:1523.5px;width:100.5px;text-align:right;top:921.12px;font-size:20.3px;line-height:23.75px;">11/1/2023</div>
<div class="t g" style="left:1635.4px;top:921.12px;font-size:20.3px;line-height:23.75px;">N/A</div>
<div class="t g" style="left:1758.9px;top:921.12px;font-size:20.3px;line-height:23.75px;">N/A</div>
<div class="t g" style="left:1882.9px;top:921.12px;font-size:20.3px;line-height:23.75px;">N/A</div>
<div class="t " style="left:2011.4px;top:921.12px;font-size:20.3px;line-height:23.75px;">Wireframes<br>General report discovery<br>Int'l discovery</div>
<div class="t " style="left:2270.4px;top:921.12px;font-size:20.3px;line-height:23.75px;">Accurate planning<br>timelines<br>Sequencing<br>Report architecture<br>definition</div>
<div class="t " style="left:82.9px;top:1072.12px;font-size:20.3px;line-height:23.75px;">1B - Create<br>skeleton</div>
<div class="t lk" style="left:324.9px;top:1072.12px;font-size:20.3px;line-height:23.75px;">Report log sources</div>
<div class="t " style="left:657.9px;top:1072.12px;font-size:20.3px;line-height:23.75px;">FE</div>
<div class="t " style="left:763.4px;top:1072.12px;font-size:20.3px;line-height:23.75px;">- We display new, valuable information about the history<br>of a report, including user who took action</div>
<div class="t g" style="left:1293.4px;top:1072.12px;font-size:20.3px;line-height:23.75px;">N/A</div>
<div class="t " style="left:1421.9px;top:1072.12px;font-size:20.3px;line-height:23.75px;">10/25/2023</div>
<div class="t " style="left:1523.5px;width:100.5px;text-align:right;top:1072.12px;font-size:20.3px;line-height:23.75px;">11/8/2023</div>
<div class="t " style="left:1635.4px;top:1072.12px;font-size:20.3px;line-height:23.75px;">Yes</div>
<div class="t " style="left:1758.9px;top:1072.12px;font-size:20.3px;line-height:23.75px;">Yes</div>
<div class="t g" style="left:1882.9px;top:1072.12px;font-size:20.3px;line-height:23.75px;">N/A</div>
<div class="t " style="left:2011.4px;top:1072.12px;font-size:20.3px;line-height:23.75px;">Product requirements<br>Design (wireframes)</div>
<div class="t " style="left:2270.4px;top:1072.12px;font-size:20.3px;line-height:23.75px;">III - Design</div>
<div class="t " style="left:82.9px;top:1128.12px;font-size:20.3px;line-height:23.75px;">1B - Create<br>skeleton</div>
<div class="t b" style="left:324.9px;top:1128.12px;font-size:20.3px;line-height:23.75px;">Report page shell (hierarchy)</div>
<div class="t " style="left:657.9px;top:1128.12px;font-size:20.3px;line-height:23.75px;">FE</div>
<div class="t " style="left:763.4px;top:1128.12px;font-size:20.3px;line-height:23.75px;">- We have a structure for the report page defined<br>- We are anticipating which type(s) of content/data will be<br>slotted where<br>- We have established tabs, side panel, and overlay<br>patterns within the report page, as applicable<br>- We've built a side panel that can be shown or hidden</div>
<div class="t g" style="left:1293.4px;top:1128.12px;font-size:20.3px;line-height:23.75px;">N/A</div>
<div class="t " style="left:1417px;width:100px;text-align:right;top:1128.12px;font-size:20.3px;line-height:23.75px;">11/1/2023</div>
<div class="t " style="left:1523.5px;width:100.5px;text-align:right;top:1128.12px;font-size:20.3px;line-height:23.75px;">11/15/2023</div>
<div class="t " style="left:1635.4px;top:1128.12px;font-size:20.3px;line-height:23.75px;">Yes</div>
<div class="t " style="left:1758.9px;top:1128.12px;font-size:20.3px;line-height:23.75px;">Yes</div>
<div class="t r" style="left:1882.9px;top:1128.12px;font-size:20.3px;line-height:23.75px;">Yes</div>
<div class="t " style="left:2011.4px;top:1128.12px;font-size:20.3px;line-height:23.75px;">Design (wireframes)</div>
<div class="t " style="left:2270.4px;top:1128.12px;font-size:20.3px;line-height:23.75px;">III - Design</div>
<div class="t " style="left:82.9px;top:1279.12px;font-size:20.3px;line-height:23.75px;">1B - Create<br>skeleton</div>
<div class="t b" style="left:324.9px;top:1279.12px;font-size:20.3px;line-height:23.75px;">Result structure</div>
<div class="t " style="left:657.9px;top:1279.12px;font-size:20.3px;line-height:23.75px;">FE</div>
<div class="t " style="left:763.4px;top:1279.12px;font-size:20.3px;line-height:23.75px;">- We've reorganized the display of charge details<br>- We've ensured that we have the info we need to<br>calculate "time since"<br>- We've accounted for Assess info (definitions,</div>
<div class="t " style="left:1293.4px;top:1279.12px;font-size:20.3px;line-height:23.75px;">Assess,<br>Crim,<br>Verifications,<br>MVR, ?</div>
<div class="t " style="left:1417px;width:100px;text-align:right;top:1279.12px;font-size:20.3px;line-height:23.75px;">11/8/2023</div>
<div class="t " style="left:1523.5px;width:100.5px;text-align:right;top:1279.12px;font-size:20.3px;line-height:23.75px;">11/29/2023</div>
<div class="t " style="left:1635.4px;top:1279.12px;font-size:20.3px;line-height:23.75px;">Yes</div>
<div class="t " style="left:1758.9px;top:1279.12px;font-size:20.3px;line-height:23.75px;">Yes</div>
<div class="t r" style="left:1882.9px;top:1279.12px;font-size:20.3px;line-height:23.75px;">Yes</div>
<div class="t " style="left:2011.4px;top:1279.12px;font-size:20.3px;line-height:23.75px;">Design (wireframes)</div>
<div class="t " style="left:2270.4px;top:1279.12px;font-size:20.3px;line-height:23.75px;">III - Design</div>
<div class="t " style="left:235.5px;width:82.5px;text-align:center;top:420.12px;font-size:20.3px;line-height:23.75px;">1</div>
<div class="t " style="left:235.5px;width:82.5px;text-align:center;top:706.12px;font-size:20.3px;line-height:23.75px;">1</div>
<div class="t " style="left:235.5px;width:82.5px;text-align:center;top:1072.12px;font-size:20.3px;line-height:23.75px;">2</div>
</div>
<svg class="ic" style="left:1402px;top:917.5px;width:13.2px;height:13.2px;" viewBox="0 0 10 10" preserveAspectRatio="none"><path d="M0 0H10V10Z" fill="#f1bf42"/></svg>
<svg class="ic" style="left:0;top:0;width:2560px;height:1451px;pointer-events:none" viewBox="0 0 2560 1451"><rect x="0.00" y="238.90" width="2465.50" height="1.8" fill="#c8c8c8"/><rect x="0.00" y="279.10" width="2446.50" height="1.8" fill="#c8c8c8"/><rect x="76.10" y="240.00" width="1.8" height="1126.00" fill="#c8c8c8"/><rect x="233.60" y="240.00" width="1.8" height="40.00" fill="#c8c8c8"/><rect x="318.10" y="240.00" width="1.8" height="40.00" fill="#c8c8c8"/><rect x="644.10" y="240.00" width="1.8" height="40.00" fill="#c8c8c8"/><rect x="756.60" y="240.00" width="1.8" height="40.00" fill="#c8c8c8"/><rect x="1286.60" y="240.00" width="1.8" height="40.00" fill="#c8c8c8"/><rect x="1415.10" y="240.00" width="1.8" height="40.00" fill="#c8c8c8"/><rect x="1521.60" y="240.00" width="1.8" height="40.00" fill="#c8c8c8"/><rect x="1628.60" y="240.00" width="1.8" height="40.00" fill="#c8c8c8"/><rect x="1752.10" y="240.00" width="1.8" height="40.00" fill="#c8c8c8"/><rect x="1876.10" y="240.00" width="1.8" height="40.00" fill="#c8c8c8"/><rect x="2004.60" y="240.00" width="1.8" height="40.00" fill="#c8c8c8"/><rect x="2263.60" y="240.00" width="1.8" height="40.00" fill="#c8c8c8"/><rect x="0.00" y="318.20" width="77.00" height="1.8" fill="#c8c8c8"/><rect x="0.00" y="373.10" width="77.00" height="1.8" fill="#c8c8c8"/><rect x="0.00" y="494.90" width="77.00" height="1.8" fill="#c8c8c8"/><rect x="0.00" y="597.20" width="77.00" height="1.8" fill="#c8c8c8"/><rect x="0.00" y="701.00" width="77.00" height="1.8" fill="#c8c8c8"/><rect x="0.00" y="756.60" width="77.00" height="1.8" fill="#c8c8c8"/><rect x="0.00" y="836.00" width="77.00" height="1.8" fill="#c8c8c8"/><rect x="0.00" y="915.80" width="77.00" height="1.8" fill="#c8c8c8"/><rect x="0.00" y="1066.85" width="77.00" height="1.8" fill="#c8c8c8"/><rect x="0.00" y="1122.60" width="77.00" height="1.8" fill="#c8c8c8"/><rect x="0.00" y="1273.10" width="77.00" height="1.8" fill="#c8c8c8"/><rect x="233.50" y="319.00" width="2.0" height="55.00" fill="rgba(0,0,0,0.1)"/><rect x="233.50" y="416.00" width="2.0" height="950.00" fill="rgba(0,0,0,0.1)"/><rect x="318.00" y="281.00" width="2.0" height="93.00" fill="rgba(0,0,0,0.1)"/><rect x="318.00" y="416.00" width="2.0" height="950.00" fill="rgba(0,0,0,0.1)"/><rect x="756.50" y="281.00" width="2.0" height="93.00" fill="rgba(0,0,0,0.1)"/><rect x="756.50" y="416.00" width="2.0" height="950.00" fill="rgba(0,0,0,0.1)"/><rect x="756.50" y="381.00" width="2.0" height="35.00" fill="rgba(0,0,0,0.09)"/><rect x="1286.50" y="281.00" width="2.0" height="93.00" fill="rgba(0,0,0,0.1)"/><rect x="1286.50" y="416.00" width="2.0" height="950.00" fill="rgba(0,0,0,0.1)"/><rect x="1286.50" y="381.00" width="2.0" height="35.00" fill="rgba(0,0,0,0.09)"/><rect x="1415.00" y="281.00" width="2.0" height="93.00" fill="rgba(0,0,0,0.1)"/><rect x="1415.00" y="416.00" width="2.0" height="950.00" fill="rgba(0,0,0,0.1)"/><rect x="1415.00" y="381.00" width="2.0" height="35.00" fill="rgba(0,0,0,0.09)"/><rect x="1521.50" y="281.00" width="2.0" height="93.00" fill="rgba(0,0,0,0.1)"/><rect x="1521.50" y="416.00" width="2.0" height="950.00" fill="rgba(0,0,0,0.1)"/><rect x="1521.50" y="381.00" width="2.0" height="35.00" fill="rgba(0,0,0,0.09)"/><rect x="1628.50" y="281.00" width="2.0" height="93.00" fill="rgba(0,0,0,0.1)"/><rect x="1628.50" y="416.00" width="2.0" height="950.00" fill="rgba(0,0,0,0.1)"/><rect x="1628.50" y="381.00" width="2.0" height="35.00" fill="rgba(0,0,0,0.09)"/><rect x="1752.00" y="281.00" width="2.0" height="93.00" fill="rgba(0,0,0,0.1)"/><rect x="1752.00" y="416.00" width="2.0" height="950.00" fill="rgba(0,0,0,0.1)"/><rect x="1752.00" y="381.00" width="2.0" height="35.00" fill="rgba(0,0,0,0.09)"/><rect x="1876.00" y="281.00" width="2.0" height="93.00" fill="rgba(0,0,0,0.1)"/><rect x="1876.00" y="416.00" width="2.0" height="950.00" fill="rgba(0,0,0,0.1)"/><rect x="1876.00" y="381.00" width="2.0" height="35.00" fill="rgba(0,0,0,0.09)"/><rect x="2004.50" y="281.00" width="2.0" height="93.00" fill="rgba(0,0,0,0.1)"/><rect x="2004.50" y="416.00" width="2.0" height="950.00" fill="rgba(0,0,0,0.1)"/><rect x="2004.50" y="381.00" width="2.0" height="35.00" fill="rgba(0,0,0,0.09)"/><rect x="2263.50" y="281.00" width="2.0" height="93.00" fill="rgba(0,0,0,0.1)"/><rect x="2263.50" y="416.00" width="2.0" height="950.00" fill="rgba(0,0,0,0.1)"/><rect x="2263.50" y="381.00" width="2.0" height="35.00" fill="rgba(0,0,0,0.09)"/><rect x="2444.50" y="281.00" width="2.0" height="93.00" fill="rgba(0,0,0,0.1)"/><rect x="2444.50" y="416.00" width="2.0" height="950.00" fill="rgba(0,0,0,0.1)"/><rect x="2444.50" y="381.00" width="2.0" height="35.00" fill="rgba(0,0,0,0.09)"/><rect x="644.10" y="281.00" width="1.2" height="93.00" fill="rgba(0,0,0,0.1)"/><rect x="644.10" y="381.00" width="1.2" height="985.00" fill="rgba(0,0,0,0.1)"/><rect x="78.00" y="318.10" width="2367.50" height="2.0" fill="rgba(0,0,0,0.1)"/><rect x="78.00" y="494.80" width="156.50" height="2.0" fill="rgba(0,0,0,0.1)"/><rect x="319.00" y="494.80" width="2126.50" height="2.0" fill="rgba(0,0,0,0.1)"/><rect x="78.00" y="597.10" width="156.50" height="2.0" fill="rgba(0,0,0,0.1)"/><rect x="319.00" y="597.10" width="2126.50" height="2.0" fill="rgba(0,0,0,0.1)"/><rect x="78.00" y="700.90" width="2367.50" height="2.0" fill="rgba(0,0,0,0.1)"/><rect x="78.00" y="756.50" width="156.50" height="2.0" fill="rgba(0,0,0,0.1)"/><rect x="319.00" y="756.50" width="2126.50" height="2.0" fill="rgba(0,0,0,0.1)"/><rect x="78.00" y="835.90" width="156.50" height="2.0" fill="rgba(0,0,0,0.1)"/><rect x="319.00" y="835.90" width="2126.50" height="2.0" fill="rgba(0,0,0,0.1)"/><rect x="78.00" y="915.70" width="156.50" height="2.0" fill="rgba(0,0,0,0.1)"/><rect x="319.00" y="915.70" width="2126.50" height="2.0" fill="rgba(0,0,0,0.1)"/><rect x="78.00" y="1066.75" width="2367.50" height="2.0" fill="rgba(0,0,0,0.1)"/><rect x="78.00" y="1122.50" width="156.50" height="2.0" fill="rgba(0,0,0,0.1)"/><rect x="319.00" y="1122.50" width="2126.50" height="2.0" fill="rgba(0,0,0,0.1)"/><rect x="78.00" y="1273.00" width="156.50" height="2.0" fill="rgba(0,0,0,0.1)"/><rect x="319.00" y="1273.00" width="2126.50" height="2.0" fill="rgba(0,0,0,0.1)"/><rect x="78.00" y="415.00" width="2367.50" height="2.0" fill="rgba(0,0,0,0.06)"/><rect x="0.00" y="1365.90" width="2465.50" height="1.8" fill="#dadada"/><rect x="0" y="373.5" width="2445.5" height="7.6" fill="#c5c7c5"/><rect x="2445.5" y="373.5" width="20" height="7.6" fill="#e1e3e1"/><rect x="646.6" y="240.6" width="6.6" height="1145.5" fill="#c5c7c5"/></svg>
<div class="a" style="left:657px;top:1370px;width:525px;height:15px;border-radius:7.500px;background:#dadce0"></div>
<div class="a" style="left:2449px;top:383px;width:15px;height:43px;border-radius:7.500px;background:#dadce0"></div>
<svg class="ic" style="left:0;top:0;width:2560px;height:1451px" viewBox="0 0 2560 1451"><rect x="2446.3" y="1312" width="19.2" height="1.3" fill="#e3e3e3"/><rect x="2446.3" y="1339.3" width="19.2" height="1.3" fill="#e3e3e3"/><path d="M2451.3 1327.8L2455.6 1322.6L2459.900 1327.800Z" fill="#bdbdbd"/><path d="M2451.3 1351L2455.6 1356.2L2459.900 1351Z" fill="#bdbdbd"/><rect x="2392" y="1368" width="1.3" height="19" fill="#e3e3e3"/><rect x="2419.5" y="1368" width="1.3" height="19" fill="#e3e3e3"/><rect x="2445" y="1368" width="1.8" height="19" fill="#dadada"/><path d="M2407.7 1372.700L2402.500 1377L2407.700 1381.300Z" fill="#bdbdbd"/><path d="M2430.5 1372.700L2435.700 1377L2430.500 1381.300Z" fill="#bdbdbd"/><rect x="2445" y="240.500" width="1.600" height="1126.500" fill="#dedede"/><rect x="0" y="1388.5" width="2465.5" height="1.6" fill="#e1e3e1"/><rect x="226" y="1390" width="359" height="61" fill="#e2e9f6"/><path d="M95.500 1422H113M104.250 1413.300V1430.700" stroke="#444746" stroke-width="2.600" fill="none"/><path d="M160 1415.300H184.300M160 1421.800H184.300M160 1428.300H184.300" stroke="#444746" stroke-width="2.500" fill="none"/><path d="M248 1436.500V1419.800A16.700 16.700 0 1 1 264.700 1436.500Z" fill="#ffffff"/><rect x="610.300" y="1414.300" width="21" height="20" rx="2.500" fill="none" stroke="#444746" stroke-width="2.400"/><path d="M620.800 1420.500H627M614.500 1427.500H620.800V1423" stroke="#444746" stroke-width="2.200" fill="none"/><path d="M2508.500 1396.500L2516.500 1403.500L2508.500 1410.500" stroke="#444746" stroke-width="2.600" fill="none"/></svg>
<div class="t b" style="left:264px;transform:translateX(-50%);top:1411.2px;font-size:17.3px;line-height:21px;color:#1f1f1f;-webkit-text-stroke:0">4</div>
<div class="t b" style="left:290.5px;top:1407.7px;font-size:24.3px;line-height:29px;color:#2656c9;letter-spacing:0.580px;-webkit-text-stroke:0">Program Milestones</div>
<svg class="ic" style="left:551px;top:1418.7px;width:14px;height:7px;" viewBox="0 0 10 5" preserveAspectRatio="none"><path d="M0 0h10L5 5z" fill="#2656c9"/></svg>
<div class="t " style="left:645px;top:1407.7px;font-size:24.3px;line-height:29px;color:#444746;letter-spacing:0.950px;-webkit-text-stroke:0.500px #444746">Report Rebuild Milestones</div>
<svg class="ic" style="left:971.7px;top:1418.7px;width:14px;height:7px;" viewBox="0 0 10 5" preserveAspectRatio="none"><path d="M0 0h10L5 5z" fill="#444746"/></svg>
<div class="t " style="left:1028.5px;top:1407.7px;font-size:24.3px;line-height:29px;color:#444746;letter-spacing:0.850px;-webkit-text-stroke:0.500px #444746">Resources</div>
<svg class="ic" style="left:1169.3px;top:1418.7px;width:14px;height:7px;" viewBox="0 0 10 5" preserveAspectRatio="none"><path d="M0 0h10L5 5z" fill="#444746"/></svg>
<svg class="ic" style="left:0;top:0;width:2560px;height:1451px" viewBox="0 0 2560 1451"><g transform="translate(2497 132)">
<path d="M0 3a3 3 0 0 1 3-3h21v7H7v17H0z" fill="#5383ec"/>
<path d="M24 0h4a3 3 0 0 1 3 3v4h-7z" fill="#3766ca"/>
<path d="M24 7h7v17h-7z" fill="#f1bf42"/>
<path d="M7 24h17v7H7z" fill="#58a65c"/>
<path d="M0 24h7v7H3a3 3 0 0 1-3-3z" fill="#3c7e40"/>
<path d="M24 24h7l-7 7z" fill="#d85140"/>
<rect x="7" y="7" width="17" height="17" fill="#fff"/>
</g><g transform="translate(2497 226)">
<rect x="-0.300" y="0.100" width="32.500" height="32.200" rx="3.200" fill="#f1bf42"/>
<path d="M15.700 8a6.600 6.600 0 0 1 4 11.850v0.900h-8v-0.900A6.600 6.600 0 0 1 15.700 8z" fill="#fff"/>
<rect x="12.200" y="22.700" width="7.100" height="2.400" fill="#fff"/>
</g><g transform="translate(2498 323)">
<circle cx="14.500" cy="15" r="11" fill="none" stroke="#3871e0" stroke-width="5"/>
<path d="M8.500 14.500L13.500 19.500L25.500 6" fill="none" stroke="#3871e0" stroke-width="4.200" stroke-linecap="round" stroke-linejoin="round"/>
<circle cx="26.500" cy="4.500" r="2.600" fill="#3871e0"/>
</g><g transform="translate(2500.5 417.500)">
<circle cx="12" cy="5.800" r="5.600" fill="#3460d2"/>
<path d="M0 23.500a8 8 0 0 1 8-8h8a8 8 0 0 1 8 8v2a2.500 2.500 0 0 1-2.500 2.500h-19A2.500 2.500 0 0 1 0 25.500z" fill="#3460d2"/>
<path d="M0 23.500a8 8 0 0 1 4-7v11.500h-1.500A2.500 2.500 0 0 1 0 25.500z" fill="#7ea6f5"/>
<path d="M24 23.500a8 8 0 0 0-4-7v11.500h1.500A2.500 2.500 0 0 0 24 25.500z" fill="#7ea6f5"/>
</g><g transform="translate(2501 511)">
<path d="M11.500 0A11.500 11.500 0 0 1 23 11.500C23 18 15 22 11.500 31C8 22 0 18 0 11.500A11.500 11.500 0 0 1 11.500 0z" fill="#58a65c"/>
<path d="M11.500 0A11.500 11.500 0 0 1 23 11.500c0 1.500-.4 2.900-1 4.200L11.500 11.500L4 3A11.500 11.500 0 0 1 11.500 0z" fill="#5383ec"/>
<path d="M4 3L11.500 11.500L2.500 19C1 16.500 0 14 0 11.500A11.500 11.500 0 0 1 4 3z" fill="#f1bf42"/>
<path d="M4 3L11.500 11.500L1 7A11.500 11.500 0 0 1 4 3z" fill="#d85140"/>
<circle cx="11.500" cy="11.500" r="4" fill="#fff"/>
</g><rect x="2496" y="601.3" width="33" height="1.5" fill="#dadce0"/><g transform="translate(2497 661)">
<path d="M15.500 0.500C12 6 12 13 15 19l5 10h10.500L16.500 0.800a.6.6 0 0 0-1-.3z" fill="#2f7bf0"/>
<path d="M9.500 13.500C12.500 17 14 22 13 29.500H0.500L8.300 13.700a.7.7 0 0 1 1.200-.2z" fill="#2563d9"/>
</g><g transform="translate(2495.5 755)">
<rect width="34" height="34" fill="#4aa7ea"/>
<ellipse cx="17" cy="16.500" rx="10.500" ry="7" fill="#fff"/>
<path d="M17 4v6" stroke="#fff" stroke-width="1.500"/><circle cx="17" cy="3.800" r="1.500" fill="#fff"/>
<path d="M10.500 15.500q2.500 3.500 5 0M18.500 15.500q2.500 3.500 5 0" stroke="#4aa7ea" stroke-width="1.600" fill="none"/>
</g><g transform="translate(2500 853)">
<path d="M13 0L25 7V22L21 24.500V9.500L13 5z" fill="#e07a2f"/>
<path d="M13 0l-3 2.500l8 4.500v15l3 2.500V9.500z" fill="#f4a15a"/>
<path d="M12.500 29L0.500 22V7L4.500 4.500V19.500L12.500 24z" fill="#e07a2f"/>
<path d="M12.500 29l3-2.500l-8-4.500V7L4.500 4.500V19.500z" fill="#f4a15a"/>
</g><path d="M2501 962H2524M2512.500 950.500V973.500" stroke="#1f1f1f" stroke-width="2.600" fill="none"/></svg>
<div class="t " style="left:2512.3px;transform:translateX(-50%);top:141.1px;font-size:14.5px;line-height:17px;color:#5383ec;letter-spacing:-0.400px;-webkit-text-stroke:0.500px #5383ec">31</div>
<div class="t b" style="left:2512.5px;transform:translateX(-50%);top:780.8px;font-size:5.5px;line-height:7px;color:#fff">WorkGPT</div>
</div>
</body></html>
